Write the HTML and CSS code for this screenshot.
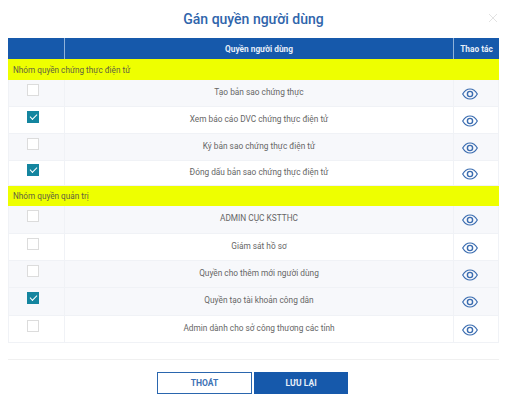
FILE: index.html
```html
<!DOCTYPE html>
<html lang="vi">
	<head>
		<meta charset="UTF-8" />
		<title>Gán quyền người dùng</title>
		<link rel="stylesheet" href="styles.css">
	</head>
	<body>
		<svg class="icon-defs" width="0" height="0">
			<symbol id="eye" viewBox="0 0 16 12">
				<path d="M0.7 6C2.6 2.6 5 1 8 1s5.4 1.6 7.3 5C13.4 9.4 11 11 8 11S2.6 9.4 0.7 6z" fill="none" stroke="currentColor" stroke-width="1.2" />
				<circle cx="8" cy="6" r="2.6" fill="none" stroke="currentColor" stroke-width="1.4" />
			</symbol>
		</svg>

		<div class="modal">
			<div class="modal-head">
				<h2>Gán quyền người dùng</h2>
				<svg class="close" viewBox="0 0 10 10" aria-label="Đóng">
					<path d="M1 1l8 8M9 1l-8 8" stroke="currentColor" stroke-width="1" fill="none" />
				</svg>
			</div>

			<table class="quyen">
				<thead>
					<tr>
						<th class="col-check"></th>
						<th>Quyền người dùng</th>
						<th class="col-action">Thao tác</th>
					</tr>
				</thead>
				<tbody>
					<tr class="group"><td colspan="3">Nhóm quyền chứng thực điện tử</td></tr>
					<tr class="tint">
						<td><span class="check"></span></td>
						<td>Tạo bản sao chứng thực</td>
						<td><svg class="eye"><use href="#eye" /></svg></td>
					</tr>
					<tr>
						<td><span class="check on"></span></td>
						<td>Xem báo cáo DVC chứng thực điện tử</td>
						<td><svg class="eye"><use href="#eye" /></svg></td>
					</tr>
					<tr class="tint">
						<td><span class="check"></span></td>
						<td>Ký bản sao chứng thực điện tử</td>
						<td><svg class="eye"><use href="#eye" /></svg></td>
					</tr>
					<tr class="short">
						<td><span class="check on"></span></td>
						<td>Đóng dấu bản sao chứng thực điện tử</td>
						<td><svg class="eye"><use href="#eye" /></svg></td>
					</tr>
					<tr class="group group-low"><td colspan="3">Nhóm quyền quản trị</td></tr>
					<tr class="tint high">
						<td><span class="check"></span></td>
						<td>ADMIN CỤC KSTTHC</td>
						<td><svg class="eye"><use href="#eye" /></svg></td>
					</tr>
					<tr>
						<td><span class="check"></span></td>
						<td>Giám sát hồ sơ</td>
						<td><svg class="eye"><use href="#eye" /></svg></td>
					</tr>
					<tr class="tint">
						<td><span class="check"></span></td>
						<td>Quyền cho thêm mới người dùng</td>
						<td><svg class="eye"><use href="#eye" /></svg></td>
					</tr>
					<tr class="tint high">
						<td><span class="check on"></span></td>
						<td>Quyền tạo tài khoản công dân</td>
						<td><svg class="eye"><use href="#eye" /></svg></td>
					</tr>
					<tr>
						<td><span class="check"></span></td>
						<td>Admin dành cho sở công thương các tỉnh</td>
						<td><svg class="eye"><use href="#eye" /></svg></td>
					</tr>
				</tbody>
			</table>

			<div class="modal-foot">
				<button class="btn btn-outline">THOÁT</button>
				<button class="btn btn-solid">LƯU LẠI</button>
			</div>
		</div>
	</body>
</html>
```

FILE: styles.css
```css
* {
	box-sizing: border-box;
}

body {
	margin: 0;
	background: white;
	font-family: Roboto, "Liberation Sans", sans-serif;
	color: #666;
}

.icon-defs {
	display: block;
}

.modal {
	width: 491px;
	margin-left: 8px;
}

.modal-head {
	display: flex;
	align-items: center;
	justify-content: center;
	height: 38px;
	position: relative;
}

.modal-head h2 {
	margin: 0;
	font-size: 14px;
	font-weight: 500;
	color: #2f65ab;
}

.close {
	position: absolute;
	right: 1px;
	top: 13px;
	width: 10px;
	height: 10px;
	color: #e2e2e2;
}

.quyen {
	width: 491px;
	border-collapse: separate;
	border-spacing: 0;
	table-layout: fixed;
	font-size: 8.3px;
}

.quyen th {
	height: 21px;
	padding: 0;
	background: #1659ab;
	color: #e6eef8;
	font-weight: 700;
	font-size: 8.3px;
	border-left: 1px solid #8fb2da;
}

.quyen th:first-child {
	border-left: none;
}

.col-check {
	width: 56px;
}

.col-action {
	width: 46px;
}

.quyen tbody tr {
	height: 27px;
}

.quyen tbody tr.short {
	height: 25px;
}

.quyen tbody tr.high {
	height: 28px;
}

.quyen td {
	padding: 0 0 5px;
	text-align: center;
	border-left: 1px solid #f0f2f6;
	border-bottom: 1px solid #f0f2f6;
}

.quyen td:nth-child(2) {
	padding-bottom: 3px;
}

.quyen td:last-child {
	border-right: 1px solid #f0f2f6;
}

.quyen tr.tint td {
	background: #f7f8fb;
}

.quyen tbody tr.group {
	height: 21px;
}

.quyen tbody tr.group-low {
	height: 20px;
}

.quyen tr.group td {
	padding: 0 0 0 5px;
	background: #eeff00;
	border: none;
	text-align: left;
	font-size: 8.2px;
	color: #5f5f40;
}

.check {
	display: block;
	width: 12px;
	height: 12px;
	margin: 0 0 2px 18px;
	border: 1px solid #dcdcdc;
	background: white;
}

.check.on {
	border: none;
	background: #14859f;
	position: relative;
}

.check.on::after {
	content: "";
	position: absolute;
	left: 3px;
	top: 3px;
	width: 6px;
	height: 3px;
	border-left: 1.5px solid white;
	border-bottom: 1.5px solid white;
	transform: rotate(-45deg);
}

.eye {
	display: block;
	width: 16px;
	height: 12px;
	margin: 6px 0 0 8px;
	color: #3a6cb0;
}

.modal-foot {
	display: flex;
	justify-content: center;
	gap: 2px;
	margin-top: 16px;
	padding: 12px 2px 0 0;
	border-top: 1px solid #f0f0f0;
}

.btn {
	width: 95px;
	height: 22px;
	padding: 0;
	font-family: inherit;
	font-size: 8.5px;
	font-weight: 700;
	border-radius: 0;
}

.btn-outline {
	background: white;
	color: #3d72b5;
	border: 1px solid #2a66ae;
}

.btn-solid {
	width: 94px;
	background: #1659ab;
	color: #e6eef8;
	border: none;
}
```
